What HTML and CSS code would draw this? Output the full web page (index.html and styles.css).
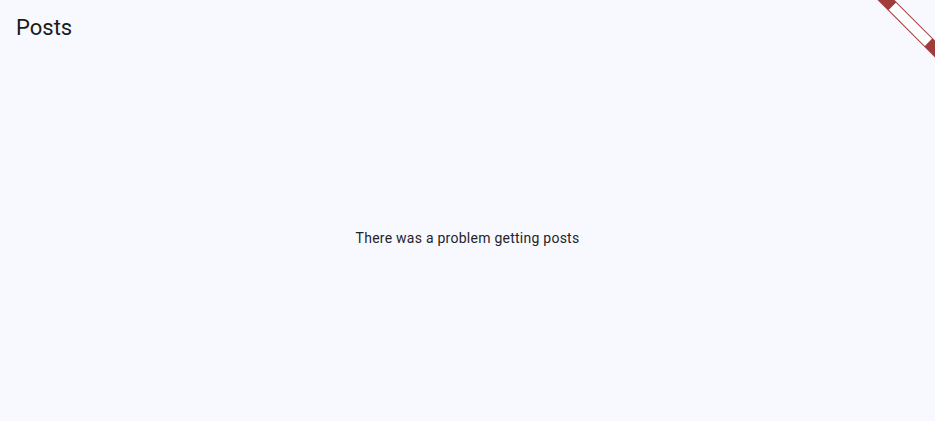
FILE: index.html
```html
<!DOCTYPE html>
<html>
<head>
<meta charset="utf-8">
<link rel="stylesheet" href="styles.css">
</head>
<body>
<div class="app">
  <header class="appbar"><h1 class="title">Posts</h1></header>
  <main class="content"><p class="message">There was a problem getting posts</p></main>
  <div class="banner"><span class="banner-label">DEBUG</span></div>
</div>
</body>
</html>
```
FILE: styles.css
```css
html, body {
  margin: 0;
  padding: 0;
  overflow: hidden;
}
body {
  background: #f8f9ff;
  font-family: Roboto, "Liberation Sans", sans-serif;
  color: #1a1b20;
}
.app {
  position: relative;
  width: 935px;
  height: 421px;
  display: flex;
  flex-direction: column;
  overflow: hidden;
}
.appbar {
  height: 56px;
  display: flex;
  align-items: center;
  padding: 0 16px;
}
.title {
  margin: 0;
  font-size: 22px;
  font-weight: 400;
  line-height: 28px;
}
.content {
  flex: 1;
  display: flex;
  align-items: center;
  justify-content: center;
  padding-bottom: 2px;
}
.message {
  margin: 0;
  font-size: 14px;
  line-height: 20px;
  letter-spacing: 0.25px;
  color: #23242a;
}
.banner {
  position: absolute;
  left: 850px;
  top: 18px;
  width: 120px;
  height: 12px;
  background: #a03c3c;
  transform: rotate(45deg);
  display: flex;
  align-items: center;
  justify-content: center;
}
.banner-label {
  width: 51px;
  height: 10px;
  background: #ffffff;
  color: #ffffff;
  font-size: 8px;
  line-height: 10px;
  overflow: hidden;
  text-align: center;
}
```
